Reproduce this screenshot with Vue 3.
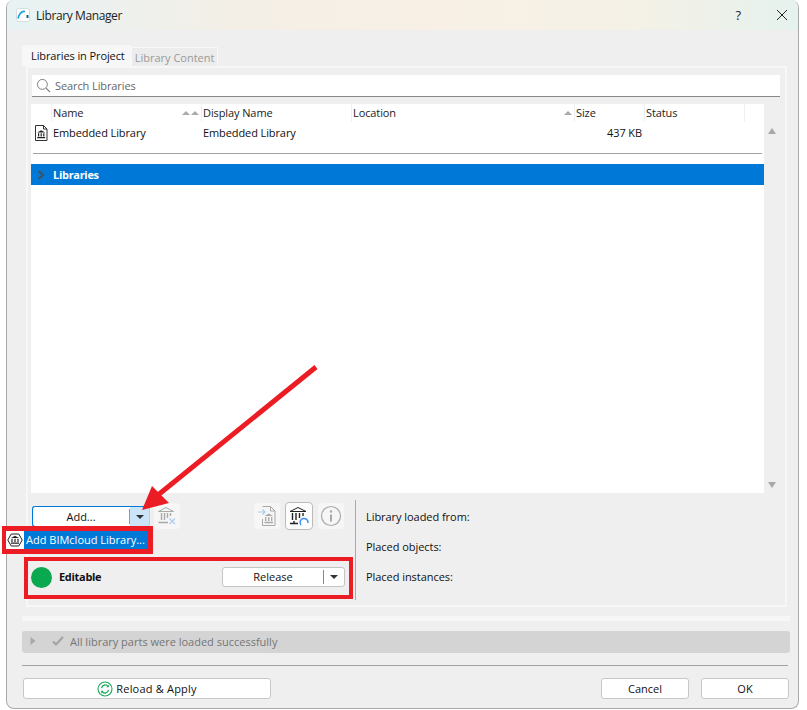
<script setup>
const columns = [
  { name: 'Name', width: 150, sort: 2 },
  { name: 'Display Name', width: 150, sort: 0 },
  { name: 'Location', width: 223, sort: 1 },
  { name: 'Size', width: 70, sort: 0 },
  { name: 'Status', width: 100, sort: 0 }
]
const infoLabels = ['Library loaded from:', 'Placed objects:', 'Placed instances:']
</script>

<template>
  <div class="page">
    <div class="window">
      <header class="titlebar">
        <svg class="app-icon" width="14" height="14" viewBox="0 0 14 14">
          <rect x="0.5" y="0.5" width="13" height="13" rx="2" fill="#fff" stroke="#d5dde0" />
          <path d="M2 10.5C3.5 5 6.5 3 9 3.5" fill="none" stroke="#1aa0dc" stroke-width="1.6" />
          <rect x="10.5" y="7" width="2" height="3" fill="#16607f" />
        </svg>
        <span class="title">Library Manager</span>
        <span class="help">?</span>
        <svg class="close" width="12" height="12" viewBox="0 0 12 12">
          <path d="M1 1L11 11M11 1L1 11" stroke="#222" stroke-width="1" fill="none" />
        </svg>
      </header>

      <div class="content">
        <div class="tabs">
          <div class="tab active">Libraries in Project</div>
          <div class="tab">Library Content</div>
        </div>

        <section class="panel">
          <div class="search">
            <svg width="15" height="15" viewBox="0 0 16 16">
              <circle cx="6.8" cy="6.8" r="5.3" fill="none" stroke="#777" stroke-width="1" />
              <path d="M10.7 10.7L15 15" stroke="#777" stroke-width="1.2" />
            </svg>
            <span>Search Libraries</span>
          </div>

          <div class="list-wrap">
            <div class="list">
              <div class="list-head">
                <div class="icon-col"></div>
                <div
                  v-for="col in columns"
                  :key="col.name"
                  class="head-cell"
                  :style="{ width: col.width + 'px' }"
                >
                  <span>{{ col.name }}</span>
                  <span class="sort">
                    <i v-for="n in col.sort" :key="n"></i>
                  </span>
                </div>
                <div class="head-end"></div>
              </div>

              <div class="row">
                <div class="icon-col">
                  <svg width="14" height="16" viewBox="0 0 14 16">
                    <path d="M1.5 .5H9.5L13 4V15.5H1.5Z" fill="#fff" stroke="#333" />
                    <path d="M9.5 .5V4H13" fill="none" stroke="#333" />
                    <path d="M7.2 5.2L11.2 7.6H3.2Z" fill="#222" />
                    <path d="M4 8.3H5.2V11.6H4ZM6.6 8.3H7.8V11.6H6.6ZM9.2 8.3H10.4V11.6H9.2ZM3.2 12H11.2V13.2H3.2Z" fill="#222" />
                  </svg>
                </div>
                <div class="cell" style="width: 150px">Embedded Library</div>
                <div class="cell" style="width: 150px">Embedded Library</div>
                <div class="cell" style="width: 223px"></div>
                <div class="cell size">437 KB</div>
              </div>

              <hr class="row-line" />

              <div class="group">
                <svg width="8" height="10" viewBox="0 0 8 10">
                  <path d="M1.5 1L6 5L1.5 9" fill="none" stroke="#44505a" stroke-width="2" />
                </svg>
                <span>Libraries</span>
              </div>
            </div>

            <div class="scrollbar">
              <i class="up"></i>
              <i class="down"></i>
            </div>
          </div>

          <div class="lower">
            <div class="controls">
              <div class="toolbar">
                <div class="add-button">
                  <span class="add-label">Add...</span>
                  <span class="add-drop"><i class="caret"></i></span>
                </div>
                <div class="tool">
                  <svg width="20" height="20" viewBox="0 0 20 20">
                    <path d="M9 1.5L16.5 5.5H1.5Z" fill="none" stroke="#a9a9a9" />
                    <path d="M4.5 7V14M7.5 7V14M10.5 7V12M13.5 7V10M1.5 16.5H11" stroke="#a9a9a9" stroke-width="1.4" fill="none" />
                    <path d="M12.5 12.5L18 18M18 12.5L12.5 18" stroke="#a8cdf2" stroke-width="1.2" fill="none" />
                  </svg>
                </div>
                <div class="tool-group">
                  <div class="tool">
                    <svg width="20" height="22" viewBox="0 0 20 22">
                      <path d="M5.5 1.5H13.5L18 6V20.5H5.5V14" fill="none" stroke="#a9a9a9" />
                      <path d="M13.5 1.5V6H18" fill="none" stroke="#a9a9a9" />
                      <path d="M1 7H8M5.5 4.5L8 7L5.5 9.5" fill="none" stroke="#a8cdf2" stroke-width="1.2" />
                      <path d="M11.7 8.5L16 11H7.5Z" fill="#a9a9a9" />
                      <path d="M8.7 12V16M11.7 12V16M14.7 12V16M7.5 17.5H16" stroke="#a9a9a9" stroke-width="1.3" />
                    </svg>
                  </div>
                  <div class="tool raised">
                    <svg width="22" height="22" viewBox="0 0 22 22">
                      <path d="M10 2.5L18 6.5H2Z" fill="none" stroke="#222" />
                      <path d="M4.5 8V15M8 8V15M11.5 8V13M15 8V11M2 18.5H10" stroke="#222" stroke-width="1.4" fill="none" />
                      <path d="M6 16V18" stroke="#222" stroke-width="1.4" />
                      <path d="M13 20A4 4 0 1 1 20 18" fill="none" stroke="#3b8ff0" stroke-width="1.5" />
                    </svg>
                  </div>
                  <div class="tool">
                    <svg width="22" height="22" viewBox="0 0 22 22">
                      <circle cx="11" cy="11" r="9.5" fill="none" stroke="#a9a9a9" stroke-width="1.2" />
                      <path d="M11 9.5V16.5" stroke="#a9a9a9" stroke-width="2" />
                      <circle cx="11" cy="6.5" r="1.2" fill="#a9a9a9" />
                    </svg>
                  </div>
                </div>
              </div>

              <div class="status-row">
                <div class="status-dot"></div>
                <b>Editable</b>
                <div class="release">
                  <span class="release-label">Release</span>
                  <span class="release-drop"><i class="caret"></i></span>
                </div>
              </div>
            </div>

            <div class="info">
              <div v-for="label in infoLabels" :key="label">{{ label }}</div>
            </div>
          </div>
        </section>

        <div class="strip"></div>

        <div class="message">
          <svg width="6" height="10" viewBox="0 0 6 10"><path d="M0.5 1L5.5 5L0.5 9Z" fill="#a8a8a8" /></svg>
          <svg class="tick" width="12" height="10" viewBox="0 0 12 10">
            <path d="M1 5.5L4 8.5L11 1" fill="none" stroke="#a3a3a3" stroke-width="2" />
          </svg>
          <span>All library parts were loaded successfully</span>
        </div>

        <hr class="footer-line" />

        <footer class="footer">
          <button class="btn reload">
            <svg width="16" height="16" viewBox="0 0 16 16">
              <circle cx="8" cy="8" r="7" fill="#fff" stroke="#19a65a" stroke-width="1.1" />
              <path d="M4.5 7.2A3.7 3.7 0 0 1 11 5.3M11.5 8.8A3.7 3.7 0 0 1 5 10.7" fill="none" stroke="#19a65a" stroke-width="1.2" />
              <path d="M11.8 3.6V6.2H9.2ZM4.2 12.4V9.8H6.8Z" fill="#19a65a" />
            </svg>
            <span>Reload &amp; Apply</span>
          </button>
          <button class="btn cancel">Cancel</button>
          <button class="btn ok">OK</button>
        </footer>
      </div>
    </div>

    <!-- popup under the Add button -->
    <div class="popup">
      <span class="popup-icon">
        <svg width="16" height="16" viewBox="0 0 16 16">
          <path d="M4.2 2H11.8L15.2 8L11.8 14H4.2L.8 8Z" fill="#fff" stroke="#222" />
          <path d="M8 3.8L12 6H4Z" fill="#222" />
          <path d="M5 6.7V10M8 6.7V10M11 6.7V10M4 11.2H12" stroke="#222" stroke-width="1.2" />
        </svg>
      </span>
      <span class="popup-label">Add BIMcloud Library...</span>
    </div>

    <!-- red annotations drawn on the screenshot -->
    <div class="mark mark-status"></div>
    <svg class="arrow" width="807" height="710" viewBox="0 0 807 710">
      <path d="M316 367L158 495" stroke="#ec1c24" stroke-width="5" fill="none" />
      <path d="M142 510L152 486L169 503Z" fill="#ec1c24" />
    </svg>
  </div>
</template>

<style scoped>
.page {
  position: relative;
  width: 807px;
  height: 710px;
  background: #fff;
  overflow: hidden;
  padding: 0 8px 1px 6px;
  box-sizing: border-box;
  font-family: "Open Sans", "Noto Sans", sans-serif;
  font-size: 11px;
  color: #111;
}

.window {
  height: 100%;
  box-sizing: border-box;
  background: #efefef;
  border: 1px solid #a9a9a9;
  border-top: 0;
  border-radius: 8px;
  overflow: hidden;
}

.titlebar {
  height: 30px;
  display: flex;
  align-items: center;
  padding: 0 10px 0 9px;
  background: linear-gradient(90deg, #e8f2f4 0%, #f4efe6 30%, #f8f0e5 55%, #f4f1e6 80%, #e6f2ee 100%);
}

.app-icon {
  margin-right: 6px;
}

.title {
  font-size: 12px;
  letter-spacing: -0.4px;
  color: #222;
  flex: 1;
}

.help {
  font-size: 13px;
  margin-right: 35px;
  color: #222;
}

.content {
  padding: 15px 8px 0 15px;
}

.tabs {
  display: flex;
  align-items: flex-end;
  height: 21px;
}

.tab {
  height: 19px;
  padding: 0 3px;
  line-height: 20px;
  color: #9a9a9a;
  background: #ececec;
  border: 1px solid #f7f7f7;
  border-bottom: 0;
  box-sizing: border-box;
}

.tab.active {
  height: 21px;
  padding: 0 5px 0 8px;
  line-height: 20px;
  letter-spacing: -0.1px;
  color: #111;
  background: #f7f7f7;
  border-radius: 2px 2px 0 0;
}

.panel {
  height: 541px;
  box-sizing: border-box;
  border: 2px solid #f7f7f7;
  background: #efefef;
  padding: 7px 5px 0 3px;
  margin: 0 3px 0 4px;
}

.search {
  margin-left: 1px;
  height: 21px;
  display: flex;
  align-items: center;
  gap: 4px;
  padding-left: 4px;
  background: #fff;
  border-bottom: 1px solid #888;
  color: #666;
  letter-spacing: -0.1px;
}

.list-wrap {
  display: flex;
  margin-top: 7px;
}

.list {
  width: 733px;
  height: 389px;
  flex: none;
  background: #fff;
  letter-spacing: -0.1px;
}

.list-head {
  display: flex;
  height: 18px;
  color: #222;
}

.icon-col {
  width: 20px;
  flex: none;
  display: flex;
  justify-content: center;
  align-items: center;
}

.head-cell {
  box-sizing: border-box;
  flex: none;
  display: flex;
  justify-content: space-between;
  align-items: center;
  padding: 0 2px 0 1px;
  border-left: 1px solid #efefef;
  line-height: 18px;
}

.head-end {
  flex: 1;
  border-left: 1px solid #efefef;
}

.sort {
  display: flex;
  gap: 1px;
}

.sort i {
  width: 0;
  height: 0;
  border: solid transparent;
  border-width: 0 4px 4px;
  border-bottom-color: #aaa;
}

.row {
  display: flex;
  height: 21px;
  align-items: center;
  line-height: 21px;
}

.cell {
  padding-left: 2px;
  box-sizing: border-box;
  flex: none;
}

.cell.size {
  width: 70px;
  text-align: right;
  padding-right: 2px;
}

.row-line {
  margin: 10px 2px 10px;
  border: 0;
  border-top: 1px solid #a3a3a3;
}

.group {
  height: 21px;
  display: flex;
  align-items: center;
  background: #0078d7;
  color: #fff;
  font-weight: 700;
  letter-spacing: -0.3px;
  padding-left: 6px;
  gap: 8px;
}

.scrollbar {
  width: 16px;
  flex: none;
  padding: 24px 0 5px 4px;
  box-sizing: border-box;
  height: 389px;
  display: flex;
  flex-direction: column;
  justify-content: space-between;
}

.scrollbar i {
  width: 0;
  height: 0;
  border: solid transparent;
  border-width: 0 4px 6px;
  border-bottom-color: #a8a8a8;
}

.scrollbar .down {
  border-width: 6px 4px 0;
  border-top-color: #a8a8a8;
  border-bottom-color: transparent;
}

.lower {
  display: flex;
  margin-top: 7px;
  height: 100px;
}

.controls {
  width: 324px;
  flex: none;
  padding-top: 3px;
}

.toolbar {
  display: flex;
  align-items: center;
  height: 26px;
}

.add-button {
  width: 118px;
  height: 21px;
  box-sizing: border-box;
  display: flex;
  background: #fff;
  border: 1px solid #0078d7;
  border-right-color: #a8d2f3;
  border-radius: 3px;
  margin: 1px 0 0 1px;
}

.add-label {
  flex: 1;
  text-align: center;
  border-right: 1px solid #999;
  margin: 2px 0;
  line-height: 15px;
}

.add-drop {
  width: 19px;
  display: flex;
  align-items: center;
  justify-content: center;
  background: #cce4f7;
}

.caret {
  width: 0;
  height: 0;
  border: solid transparent;
  border-width: 4px 4px 0;
  border-top-color: #333;
}

.tool {
  width: 26px;
  height: 26px;
  box-sizing: border-box;
  flex: none;
  display: flex;
  align-items: center;
  justify-content: center;
  background: #f6f6f6;
  border-radius: 4px;
}

.toolbar > .tool {
  margin-left: 4px;
}

.tool.raised {
  width: 28px;
  height: 28px;
  background: #fdfdfd;
  border: 1px solid #bbb;
}

.tool-group {
  display: flex;
  align-items: center;
  gap: 5px;
  margin-left: 74px;
}

.status-row {
  display: flex;
  align-items: center;
  height: 42px;
  margin-top: 27px;
}

.status-dot {
  width: 21px;
  height: 21px;
  border-radius: 50%;
  background: radial-gradient(circle at 40% 40%, #0aa84f 70%, #078a40 100%);
  margin-right: 7px;
}

.status-row b {
  flex: 1;
  letter-spacing: -0.3px;
  margin-bottom: 2px;
}

.release {
  width: 123px;
  height: 20px;
  box-sizing: border-box;
  margin-right: 10px;
  display: flex;
  align-items: center;
  background: #fff;
  border: 1px solid #c4c4c4;
  border-radius: 3px;
}

.release-label {
  flex: 1;
  text-align: center;
  border-right: 1px solid #888;
  line-height: 14px;
}

.release-drop {
  width: 20px;
  display: flex;
  justify-content: center;
}

.info {
  flex: 1;
  border-left: 1px solid #a9a9a9;
  padding: 9px 0 0 10px;
  display: flex;
  flex-direction: column;
  gap: 15px;
  line-height: 15px;
  height: 100px;
  box-sizing: border-box;
  letter-spacing: -0.05px;
}

.strip {
  height: 5px;
  margin-top: 9px;
  background: #f6f6f6;
}

.message {
  margin-top: 10px;
  height: 22px;
  box-sizing: border-box;
  padding: 0 0 2px 8px;
  display: flex;
  align-items: center;
  background: #d4d4d4;
  border-radius: 3px;
  color: #757575;
}

.tick {
  margin: 0 6px 0 16px;
}

.footer-line {
  margin: 12px 2px 0 0;
  border: 0;
  border-top: 1px solid #a3a3a3;
}

.footer {
  display: flex;
  margin-top: 12px;
  padding: 0 1px;
}

.btn {
  height: 21px;
  box-sizing: border-box;
  background: #fff;
  border: 1px solid #c8c8c8;
  border-radius: 3px;
  font: inherit;
  color: #111;
  padding: 0;
}

.reload {
  width: 248px;
  display: flex;
  align-items: center;
  justify-content: center;
  gap: 3px;
}

.reload span {
  letter-spacing: 0.2px;
}

.cancel {
  width: 88px;
  margin-left: auto;
}

.ok {
  width: 88px;
  margin-left: 12px;
}

.popup {
  position: absolute;
  left: 2px;
  top: 526px;
  width: 151px;
  height: 28px;
  box-sizing: border-box;
  border: 5px solid #ec1c24;
  border-left-width: 4px;
  display: flex;
  color: #fff;
  background: #0078d7;
}

.popup-icon {
  width: 18px;
  background: #fff;
  display: flex;
  align-items: center;
  justify-content: center;
}

.popup-label {
  padding-left: 2px;
  line-height: 18px;
  white-space: nowrap;
}

.mark {
  position: absolute;
  box-sizing: border-box;
  border: 4px solid #ec1c24;
}

.mark-status {
  left: 24px;
  top: 557px;
  width: 329px;
  height: 42px;
}

.arrow {
  position: absolute;
  left: 0;
  top: 0;
  pointer-events: none;
}
</style>
